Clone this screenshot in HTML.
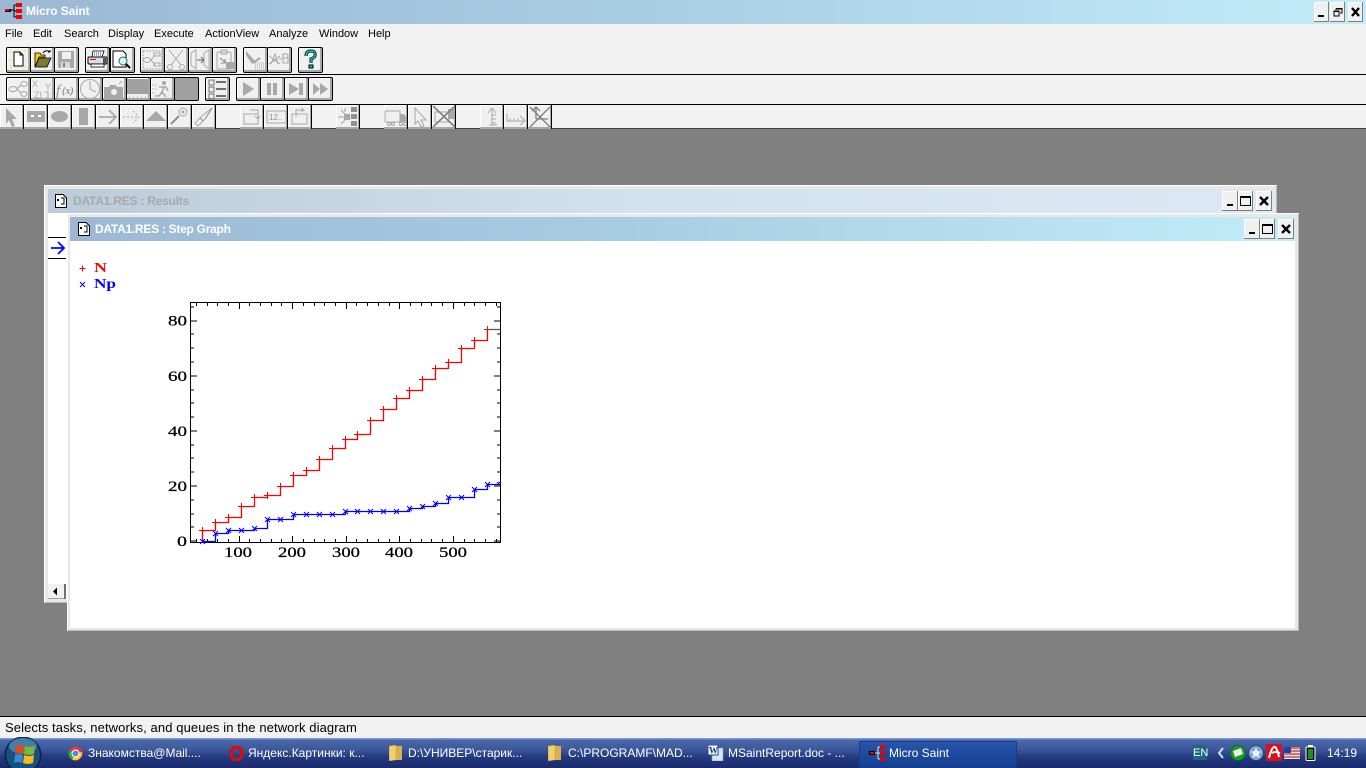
<!DOCTYPE html>
<html><head><meta charset="utf-8"><title>Micro Saint</title>
<style>
html,body{margin:0;padding:0;width:1366px;height:768px;overflow:hidden;background:#808080;font-family:"Liberation Sans","Noto Sans CJK SC",sans-serif}
div,span,svg{position:absolute}
.t{white-space:nowrap}
.menu{font-size:11px;top:28px;color:#000;line-height:13px}
.b{box-sizing:border-box;width:25px;background:#f0f0f0;border:1px solid #000;border-radius:2px;box-shadow:inset -2px -2px 0 #a8a8a8,inset 1px 1px 0 #fff}
.c{box-sizing:border-box;width:24px;height:24px;top:105px;background:#f0f0f0;border-right:1px solid #000;box-shadow:inset -1px -2px 0 #a8a8a8,inset 1px 1px 0 #fff}
.b svg,.c svg{left:-1px;top:-1px;width:24px;height:24px}
.c svg{left:0;top:0}
.w{box-sizing:border-box;background:#f0f0f0;box-shadow:inset -1px -1px 0 #808080,inset 1px 1px 0 #fff;height:20px}
.w svg{left:0;top:0;width:100%;height:100%}
.task{color:#fff;font-size:12px;top:746px;line-height:14px;white-space:nowrap}
.g{fill:none;stroke:#a8a8a8;stroke-width:1}
</style></head><body>

<!-- Main title -->
<div style="left:0;top:0;width:1366px;height:24px;background:linear-gradient(90deg,#9cb8d4 0%,#a8cce2 45%,#c2ecfa 100%)"></div>
<svg style="left:4px;top:3px" width="18" height="16" viewBox="0 0 18 16"><path d="M7 7H10M10 2V14M10 2H12M10 8H12M10 14H12" stroke="#000" fill="none"/><rect x="1" y="6" width="6" height="3" fill="#000"/><rect x="1" y="6" width="4" height="2" fill="#f00"/><rect x="12" y="0" width="6" height="4" fill="#e00"/><rect x="12" y="6" width="6" height="4" fill="#e00"/><rect x="12" y="12" width="6" height="4" fill="#e00"/></svg>
<div class="t" style="left:26px;top:4px;font-size:12px;font-weight:bold;color:#fff;line-height:15px;letter-spacing:-.1px">Micro Saint</div>
<div class="w" style="left:1314px;top:2px;width:15px"><svg viewBox="0 0 15 20"><rect x="4" y="13" width="6" height="2" fill="#000"/></svg></div>
<div class="w" style="left:1330px;top:2px;width:15px"><svg viewBox="0 0 15 20"><path d="M6 6.5H12V11H10M6 6.5V8M4 9H9V14H4Z M4 9.5H9 M6 7H12" fill="none" stroke="#000"/></svg></div>
<div class="w" style="left:1348px;top:2px;width:15px"><svg viewBox="0 0 15 20"><path d="M4 6L11 14M11 6L4 14" stroke="#000" stroke-width="2.4"/></svg></div>

<!-- Menu + toolbars -->
<div style="left:0;top:24px;width:1366px;height:104px;background:#f2f2f2"></div>
<div class="menu t" style="left:5px">File</div>
<div class="menu t" style="left:33px">Edit</div>
<div class="menu t" style="left:64px">Search</div>
<div class="menu t" style="left:108px">Display</div>
<div class="menu t" style="left:154px">Execute</div>
<div class="menu t" style="left:205px">ActionView</div>
<div class="menu t" style="left:269px">Analyze</div>
<div class="menu t" style="left:319px">Window</div>
<div class="menu t" style="left:368px">Help</div>
<div style="left:0;top:74px;width:1366px;height:1px;background:#000"></div>
<div style="left:0;top:104px;width:1366px;height:1px;background:#000"></div>
<div style="left:0;top:128px;width:1366px;height:1px;background:#404040"></div>

<!-- Row 1 -->
<div class="b" style="left:6px;top:47px;height:26px"><svg viewBox="0 0 24 24"><path d="M8 5H14L17 8V19H8Z" fill="#fff" stroke="#000"/><path d="M14 5V8H17" fill="none" stroke="#000"/><path d="M4 4L6 6M20 3L18 5M3 13H5M21 13H20M4 21L6 19M20 21L18 19M12 2V3" stroke="#ee0"/></svg></div>
<div class="b" style="left:30px;top:47px;height:26px"><svg viewBox="0 0 24 24"><path d="M5 9V6H10L11 8H15V10H9L5 20Z" fill="#fc0" stroke="#000" stroke-width=".8"/><path d="M5 20L9 11H21L17 20Z" fill="#7a7a30" stroke="#000" stroke-width=".8"/><path d="M13 6Q16 2 20 5M20 5V3M20 5H18" fill="none" stroke="#000"/></svg></div>
<div class="b" style="left:54px;top:47px;height:26px"><svg viewBox="0 0 24 24"><path d="M4 4H20V21H4Z" fill="#a8a8a8"/><rect x="8" y="5" width="9" height="7" fill="#f0f0f0"/><rect x="7" y="15" width="9" height="6" fill="#d8d8d8"/><rect x="9" y="16" width="2" height="4" fill="#808080"/></svg></div>
<div class="b" style="left:85px;top:47px;height:26px"><svg viewBox="0 0 24 24"><path d="M8 4H19L17 10H7Z" fill="#fff" stroke="#000" stroke-width=".8"/><path d="M9 6H17M9 8H16" stroke="#24c" stroke-dasharray="1 1"/><rect x="3" y="10" width="19" height="7" rx="1" fill="#ddd" stroke="#000"/><rect x="5" y="12" width="6" height="1" fill="#f00"/><rect x="18" y="11" width="3" height="6" fill="#555"/><rect x="6" y="17" width="13" height="3" fill="#fff" stroke="#000" stroke-width=".8"/></svg></div>
<div class="b" style="left:110px;top:47px;height:26px"><svg viewBox="0 0 24 24"><path d="M3 4H13L16 7V20H3Z" fill="#fff" stroke="#000"/><circle cx="13" cy="14" r="4" fill="#bff" stroke="#555"/><path d="M16 17L20 21" stroke="#000" stroke-width="2"/></svg></div>
<div class="b" style="left:140px;top:47px;height:26px"><svg viewBox="0 0 24 24"><rect x="3" y="4" width="19" height="18" class="g" stroke-dasharray="2 1"/><ellipse cx="7" cy="13" rx="3.5" ry="2.5" class="g"/><path d="M11 13L15 8M11 13L15 18" class="g"/><rect x="14" y="6" width="6" height="3" class="g"/><rect x="14" y="16" width="6" height="3" class="g"/></svg></div>
<div class="b" style="left:164px;top:47px;height:26px"><svg viewBox="0 0 24 24"><path d="M5 3L17 18M19 3L7 18" class="g" stroke-width="1.5"/><circle cx="6" cy="20" r="2.5" class="g"/><circle cx="18" cy="20" r="2.5" class="g"/></svg></div>
<div class="b" style="left:188px;top:47px;height:26px"><svg viewBox="0 0 24 24"><path d="M3 6L8 3V22L3 18ZM21 3V22L16 18V6Z" class="g"/><path d="M9 13H15M13 10L16 13L13 16" stroke="#808080" fill="none" stroke-width="1.3"/></svg></div>
<div class="b" style="left:212px;top:47px;height:26px"><svg viewBox="0 0 24 24"><rect x="5" y="5" width="14" height="17" rx="1" class="g"/><rect x="9" y="3" width="6" height="4" class="g"/><path d="M8 11L13 15M13 12V16H9" stroke="#808080" fill="none"/><rect x="14" y="15" width="8" height="7" fill="#a8a8a8"/></svg></div>
<div class="b" style="left:243px;top:47px;height:26px"><svg viewBox="0 0 24 24"><path d="M3 4L12 14L9 17L3 8Z" fill="#a8a8a8"/><path d="M10 16L17 11" stroke="#a8a8a8" stroke-width="2"/><path d="M12 16H21M12 18H21M12 20H21M12 22H21" stroke="#a8a8a8" stroke-dasharray="1 1"/></svg></div>
<div class="b" style="left:267px;top:47px;height:26px"><svg viewBox="0 0 24 24"><path d="M4 17L8 7L11 17M5 14H10M2 9L13 17M2 17L13 9" class="g"/><path d="M12 12H15" class="g"/><path d="M16 7H20Q22 9 20 11H16ZM16 11H21V16H16Z" class="g"/></svg></div>
<div class="b" style="left:298px;top:47px;height:26px"><svg viewBox="0 0 24 24"><path d="M8 9Q8 4 13 4Q18 4 17 9Q16 11 13 12V16" fill="none" stroke="#000" stroke-width="3"/><path d="M8 9Q8 4 13 4Q18 4 17 9Q16 11 13 12V16" fill="none" stroke="#1cc" stroke-width="1.4"/><rect x="11" y="18" width="4" height="3" fill="#1cc" stroke="#000"/></svg></div>

<!-- Row 2 -->
<div class="b" style="left:6px;top:77px;height:24px"><svg viewBox="0 0 24 24"><ellipse cx="7" cy="12" rx="4" ry="2.5" class="g"/><path d="M11 12L15 8M11 12L15 16" class="g"/><ellipse cx="18" cy="7" rx="3" ry="2.5" class="g"/><ellipse cx="18" cy="17" rx="3" ry="2.5" class="g"/></svg></div>
<div class="b" style="left:30px;top:77px;height:24px"><svg viewBox="0 0 24 24"><text x="2" y="10" font-size="9" fill="#a8a8a8" font-family="Liberation Sans">X</text><text x="15" y="13" font-size="9" fill="#a8a8a8" font-family="Liberation Sans">Y</text><text x="4" y="21" font-size="9" fill="#a8a8a8" font-family="Liberation Sans">ZI</text><path d="M15 15H18V21H15" class="g"/></svg></div>
<div class="b" style="left:54px;top:77px;height:24px"><svg viewBox="0 0 24 24"><text x="2" y="18" font-size="15" font-style="italic" font-family="Liberation Serif" fill="#909090">f</text><text x="8" y="17" font-size="10" font-weight="bold" font-style="italic" font-family="Liberation Serif" fill="#909090">(x)</text></svg></div>
<div class="b" style="left:78px;top:77px;height:24px"><svg viewBox="0 0 24 24"><circle cx="12" cy="12" r="9.5" class="g"/><path d="M12 4V12L18 15" class="g"/></svg></div>
<div class="b" style="left:102px;top:77px;height:24px"><svg viewBox="0 0 24 24"><path d="M2 10H7L8 8H14L15 10H21V21H2Z" fill="#a8a8a8"/><circle cx="12" cy="15" r="3" fill="#f0f0f0"/><path d="M17 7L20 4" stroke="#a8a8a8"/></svg></div>
<div class="b" style="left:126px;top:77px;height:24px"><svg viewBox="0 0 24 24"><rect x="1" y="2" width="21" height="15" fill="#a0a0a0"/><path d="M3 20H21" stroke="#a0a0a0" stroke-dasharray="1 3"/></svg></div>
<div class="b" style="left:150px;top:77px;height:24px"><svg viewBox="0 0 24 24"><circle cx="14" cy="6" r="2" fill="#a8a8a8"/><path d="M9 10H16L18 14M14 10L12 15L16 20M12 15L9 19H5" stroke="#a8a8a8" fill="none" stroke-width="1.6"/><path d="M2 8H7M2 12H7M2 16H6" stroke="#a8a8a8" stroke-dasharray="1 1"/></svg></div>
<div class="b" style="left:174px;top:77px;height:24px;background:#a0a0a0;box-shadow:none"></div>
<div class="b" style="left:205px;top:77px;height:24px"><svg viewBox="0 0 24 24"><rect x="4" y="3" width="5" height="5" style="fill:none;stroke:#707070"/><rect x="4" y="10" width="5" height="5" style="fill:none;stroke:#707070"/><rect x="4" y="17" width="5" height="5" style="fill:none;stroke:#707070"/><path d="M11 5H21M11 12H21M11 19H21" stroke="#707070" stroke-width="2"/></svg></div>
<div class="b" style="left:236px;top:77px;height:24px"><svg viewBox="0 0 24 24"><path d="M7 5L18 12L7 19Z" fill="#a8a8a8"/></svg></div>
<div class="b" style="left:260px;top:77px;height:24px"><svg viewBox="0 0 24 24"><rect x="7" y="6" width="4" height="12" fill="#a8a8a8"/><rect x="13" y="6" width="4" height="12" fill="#a8a8a8"/></svg></div>
<div class="b" style="left:284px;top:77px;height:24px"><svg viewBox="0 0 24 24"><path d="M5 6L15 12L5 18Z" fill="#a8a8a8"/><rect x="15" y="6" width="4" height="12" fill="#a8a8a8"/></svg></div>
<div class="b" style="left:308px;top:77px;height:24px"><svg viewBox="0 0 24 24"><path d="M5 6L12 12L5 18ZM12 6L20 12L12 18Z" fill="#a8a8a8"/></svg></div>

<!-- Row 3 -->
<div class="c" style="left:0"><svg viewBox="0 0 24 24"><path d="M6 3L17 14H12L15 21L12 22L9 15L6 19Z" fill="#a8a8a8"/></svg></div>
<div class="c" style="left:24px"><svg viewBox="0 0 24 24"><rect x="3" y="6" width="18" height="11" rx="1" fill="#a8a8a8"/><rect x="7" y="10" width="3" height="2" fill="#fff"/><rect x="14" y="10" width="3" height="2" fill="#fff"/></svg></div>
<div class="c" style="left:48px"><svg viewBox="0 0 24 24"><ellipse cx="11.500" cy="11.500" rx="8.500" ry="5.500" fill="#a8a8a8"/></svg></div>
<div class="c" style="left:72px"><svg viewBox="0 0 24 24"><rect x="7" y="3" width="9" height="17" fill="#a8a8a8"/></svg></div>
<div class="c" style="left:96px"><svg viewBox="0 0 24 24"><path d="M3 12H20M13 5L20 12L13 19" fill="none" stroke="#a8a8a8" stroke-width="1.7"/></svg></div>
<div class="c" style="left:120px"><svg viewBox="0 0 24 24"><path d="M3 12H18M13 6L19 12L13 18" fill="none" stroke="#a8a8a8" stroke-dasharray="2 2"/></svg></div>
<div class="c" style="left:144px"><svg viewBox="0 0 24 24"><path d="M2 16L12 6L22 16Z" fill="#a8a8a8"/></svg></div>
<div class="c" style="left:168px"><svg viewBox="0 0 24 24"><circle cx="15" cy="7" r="4" class="g" stroke-width="1.5"/><circle cx="15" cy="7" r="1.500" fill="#a8a8a8"/><path d="M11 11L3 19" stroke="#909090" stroke-width="2"/></svg></div>
<div class="c" style="left:192px"><svg viewBox="0 0 24 24"><path d="M20 3L10 11L3 18L6 21L13 14Z" class="g"/><path d="M8 13L11 16M20 3L13 14" stroke="#909090"/></svg></div>
<div class="c" style="left:240px"><svg viewBox="0 0 24 24"><rect x="4" y="9" width="14" height="10" class="g"/><path d="M10 5H18V14M15 11L18 14L20 11" class="g"/></svg></div>
<div class="c" style="left:264px"><svg viewBox="0 0 24 24"><rect x="3" y="6" width="19" height="12" class="g"/><text x="5" y="15" font-size="8" fill="#909090" font-family="Liberation Sans">12..</text></svg></div>
<div class="c" style="left:288px"><svg viewBox="0 0 24 24"><rect x="4" y="9" width="15" height="10" class="g"/><path d="M8 12V5H16L13 3M16 5L13 7" class="g"/></svg></div>
<div class="c" style="left:336px"><svg viewBox="0 0 24 24"><path d="M2 12H8M5 5L9 9M5 19L9 15M9 3V7" stroke="#a8a8a8"/><rect x="8" y="9" width="6" height="6" fill="#a8a8a8"/><rect x="15" y="2" width="6" height="5" fill="#909090"/><rect x="15" y="9" width="6" height="5" fill="#909090"/><rect x="15" y="16" width="6" height="5" fill="#909090"/></svg></div>
<div class="c" style="left:384px"><svg viewBox="0 0 24 24"><rect x="1" y="6" width="15" height="11" class="g"/><path d="M16 9H20L23 13V17H16Z" fill="#a8a8a8"/><circle cx="5" cy="19" r="1.500" class="g"/><circle cx="9" cy="19" r="1.500" class="g"/><circle cx="17" cy="19" r="1.500" class="g"/><circle cx="21" cy="19" r="1.500" class="g"/></svg></div>
<div class="c" style="left:408px"><svg viewBox="0 0 24 24"><path d="M7 3L18 15H13L16 21L13 22L10 16L7 19Z" class="g"/></svg></div>
<div class="c" style="left:432px"><svg viewBox="0 0 24 24"><rect x="3" y="7" width="14" height="10" class="g"/><rect x="16" y="4" width="6" height="10" fill="#a8a8a8"/><path d="M1 1L23 22M23 1L1 22" stroke="#808080" stroke-width="1.6"/></svg></div>
<div class="c" style="left:480px"><svg viewBox="0 0 24 24"><path d="M12 3L8 8M12 3L16 8M12 3V20H9M12 10H16M12 14H16M12 18H16M9 20H17" class="g"/></svg></div>
<div class="c" style="left:504px"><svg viewBox="0 0 24 24"><path d="M3 9V16H20M16 11L21 15.500L16 20M6 13V16M10 13V16M14 13V16" class="g"/></svg></div>
<div class="c" style="left:528px"><svg viewBox="0 0 24 24"><path d="M8 2V14M4 6L8 2L12 6M8 14H20M2 2L22 22M22 2L2 22" stroke="#808080" fill="none" stroke-width="1.3"/></svg></div>

<!-- Results window -->
<div style="left:44px;top:185px;width:1233px;height:418px;background:#e8e8e4;box-shadow:inset 1px 1px 0 #fff,inset -1px -1px 0 #b8b8b8"></div>
<div style="left:48px;top:189px;width:1226px;height:24px;background:linear-gradient(90deg,#bccbda,#d2e2f0 50%,#dce8f4)"></div>
<div style="left:48px;top:213px;width:20px;height:386px;background:#fff"></div>
<svg style="left:54px;top:193px" width="14" height="15" viewBox="0 0 14 15"><path d="M1.500 1.500H9L12.500 5V14.500H1.500Z" fill="#fff" stroke="#000"/><rect x="3" y="6" width="2" height="2" fill="#000"/><path d="M7 5H10V11H7" fill="none" stroke="#000"/></svg>
<div class="t" style="left:73px;top:194px;font-size:12px;font-weight:bold;color:#a8a8a8;line-height:14px;letter-spacing:-.22px">DATA1.RES : Results</div>
<div class="w" style="left:1222px;top:191px;width:16px"><svg viewBox="0 0 16 20"><rect x="5" y="13" width="6" height="2" fill="#000"/></svg></div>
<div class="w" style="left:1238px;top:191px;width:15px"><svg viewBox="0 0 15 20"><path d="M2.500 5.500H12.500V14.500H2.500Z" fill="none" stroke="#000"/><path d="M2 6H13" stroke="#000" stroke-width="2"/></svg></div>
<div class="w" style="left:1256px;top:191px;width:16px"><svg viewBox="0 0 16 20"><path d="M4 6L12 14M12 6L4 14" stroke="#000" stroke-width="2.4"/></svg></div>
<div style="left:48px;top:237px;width:18px;height:1px;background:#000"></div>
<div style="left:48px;top:258px;width:18px;height:1px;background:#000"></div>
<svg style="left:50px;top:240px" width="16" height="16" viewBox="0 0 16 16"><path d="M1 8H14M8 2L14 8L8 14" fill="none" stroke="#00f" stroke-width="1.800"/></svg>
<div style="left:48px;top:584px;width:16px;height:15px;background:#f0f0f0;box-shadow:inset 0 -1px 0 #a0a0a0"></div>
<div style="left:64px;top:584px;width:2px;height:15px;background:#707070"></div>
<svg style="left:48px;top:584px" width="16" height="15" viewBox="0 0 16 15"><path d="M5 7.500L9 3.500V11.500Z" fill="#000"/></svg>

<!-- Step Graph window -->
<div style="left:67px;top:213px;width:1232px;height:418px;background:#e8e8e4;box-shadow:inset 1px 1px 0 #fff,inset -1px -1px 0 #b8b8b8"></div>
<div style="left:70px;top:217px;width:1225px;height:24px;background:linear-gradient(90deg,#9cb8d4,#a8cce2 45%,#c2ecfa)"></div>
<div style="left:70px;top:241px;width:1225px;height:387px;background:#fff"></div>
<svg style="left:77px;top:221px" width="14" height="15" viewBox="0 0 14 15"><path d="M1.500 1.500H9L12.500 5V14.500H1.500Z" fill="#fff" stroke="#000"/><rect x="3" y="6" width="2" height="2" fill="#000"/><path d="M7 5H10V11H7" fill="none" stroke="#000"/></svg>
<div class="t" style="left:95px;top:222px;font-size:12px;font-weight:bold;color:#fff;line-height:14px;letter-spacing:-.27px">DATA1.RES : Step Graph</div>
<div class="w" style="left:1244px;top:219px;width:16px"><svg viewBox="0 0 16 20"><rect x="5" y="13" width="6" height="2" fill="#000"/></svg></div>
<div class="w" style="left:1260px;top:219px;width:15px"><svg viewBox="0 0 15 20"><path d="M2.500 5.500H12.500V14.500H2.500Z" fill="none" stroke="#000"/><path d="M2 6H13" stroke="#000" stroke-width="2"/></svg></div>
<div class="w" style="left:1278px;top:219px;width:16px"><svg viewBox="0 0 16 20"><path d="M4 6L12 14M12 6L4 14" stroke="#000" stroke-width="2.4"/></svg></div>

<!-- Plot -->
<svg style="left:0;top:0" width="1366" height="768" viewBox="0 0 1366 768" font-family="Liberation Serif">
<g shape-rendering="crispEdges" fill="none">
<path d="M190.500 302.500H500.500V542.500H190.500Z" stroke="#000"/>
<path stroke="#000" d="M191 541h6M191 527h3M191 514h3M191 500h3M191 486h6M191 472h3M191 458h3M191 445h3M191 431h6M191 417h3M191 403h3M191 390h3M191 376h6M191 362h3M191 348h3M191 334h3M191 321h6M191 307h3
M500 541h-6M500 527h-3M500 514h-3M500 500h-3M500 486h-6M500 472h-3M500 458h-3M500 445h-3M500 431h-6M500 417h-3M500 403h-3M500 390h-3M500 376h-6M500 362h-3M500 348h-3M500 334h-3M500 321h-6M500 307h-3"/>
<path stroke="#000" d="M196.500 303v3M207.500 303v3M217.500 303v3M228.500 303v3M239.500 303v6M249.500 303v3M260.500 303v3M271.500 303v3M281.500 303v3M292.500 303v6M303.500 303v3M314.500 303v3M324.500 303v3M335.500 303v3M346.500 303v6M356.500 303v3M367.500 303v3M378.500 303v3M389.500 303v3M399.500 303v6M410.500 303v3M421.500 303v3M431.500 303v3M442.500 303v3M453.500 303v6M464.500 303v3M474.500 303v3M485.500 303v3M496.500 303v3
M196.500 542v-3M207.500 542v-3M217.500 542v-3M228.500 542v-3M239.500 542v-6M249.500 542v-3M260.500 542v-3M271.500 542v-3M281.500 542v-3M292.500 542v-6M303.500 542v-3M314.500 542v-3M324.500 542v-3M335.500 542v-3M346.500 542v-6M356.500 542v-3M367.500 542v-3M378.500 542v-3M389.500 542v-3M399.500 542v-6M410.500 542v-3M421.500 542v-3M431.500 542v-3M442.500 542v-3M453.500 542v-6M464.500 542v-3M474.500 542v-3M485.500 542v-3M496.500 542v-3"/>
</g>
<!-- N -->
<path fill="none" stroke-width="1.300" stroke="#f00" d="M202.500 541V530.500H215.500V522.500H228.500V517.500H241.500V506.500H254.500V497.500H267.500V495.500H280.500V486.500H293.500V475.500H306.500V470.500H319.500V459.500H332.500V448.500H345.500V439.500H357.500V434.500H370.500V420.500H383.500V409.500H396.500V398.500H409.500V390.500H422.500V379.500H435.500V368.500H448.500V362.500H461.500V348.500H474.500V340.500H487.500V329.500H500"/>
<g shape-rendering="crispEdges" fill="none">
<path stroke="#f00" d="M199 530.500h7M202.500 527v7M212 522.500h7M215.500 519v7M225 517.500h7M228.500 514v7M238 506.500h7M241.500 503v7M251 497.500h7M254.500 494v7M264 495.500h7M267.500 492v7M277 486.500h7M280.500 483v7M290 475.500h7M293.500 472v7M303 470.500h7M306.500 467v7M316 459.500h7M319.500 456v7M329 448.500h7M332.500 445v7M342 439.500h7M345.500 436v7M354 434.500h7M357.500 431v7M367 420.500h7M370.500 417v7M380 409.500h7M383.500 406v7M393 398.500h7M396.500 395v7M406 390.500h7M409.500 387v7M419 379.500h7M422.500 376v7M432 368.500h7M435.500 365v7M445 362.500h7M448.500 359v7M458 348.500h7M461.500 345v7M471 340.500h7M474.500 337v7M484 329.500h7M487.500 326v7"/>
<path stroke="#555" d="M487 329.500h13M487.500 326v4"/>
</g>
<!-- Np -->
<path fill="none" stroke-width="1.300" stroke="#00f" d="M202 541.500H215.500V533.500H228.500V530.500H254.500V528.500H267.500V519.500H293.500V514.500H345.500V511.500H409.500V508.500H422.500V506.500H435.500V503.500H448.500V497.500H474.500V489.500H487.500V484.500H500"/>
<g stroke="#00f" fill="none">
<path d="M200 539l5 5M205 539l-5 5M213 531l5 5M218 531l-5 5M226 528l5 5M231 528l-5 5M239 528l5 5M244 528l-5 5M252 526l5 5M257 526l-5 5M265 517l5 5M270 517l-5 5M278 517l5 5M283 517l-5 5M291 512l5 5M296 512l-5 5M304 512l5 5M309 512l-5 5M317 512l5 5M322 512l-5 5M330 512l5 5M335 512l-5 5M343 509l5 5M348 509l-5 5M355 509l5 5M360 509l-5 5M368 509l5 5M373 509l-5 5M381 509l5 5M386 509l-5 5M394 509l5 5M399 509l-5 5M407 506l5 5M412 506l-5 5M420 504l5 5M425 504l-5 5M433 501l5 5M438 501l-5 5M446 495l5 5M451 495l-5 5M459 495l5 5M464 495l-5 5M472 487l5 5M477 487l-5 5M485 482l5 5M490 482l-5 5M497 482l3 3M500 482l-3 3"/>
</g>
<g fill="#000" stroke="#000" stroke-width=".25" font-size="15">
<text x="168" y="325.500" textLength="19" lengthAdjust="spacingAndGlyphs">80</text>
<text x="168" y="381" textLength="19" lengthAdjust="spacingAndGlyphs">60</text>
<text x="168" y="436" textLength="19" lengthAdjust="spacingAndGlyphs">40</text>
<text x="168" y="491" textLength="19" lengthAdjust="spacingAndGlyphs">20</text>
<text x="177" y="546" textLength="10" lengthAdjust="spacingAndGlyphs">0</text>
<text x="224" y="557" textLength="28" lengthAdjust="spacingAndGlyphs">100</text>
<text x="278" y="557" textLength="28" lengthAdjust="spacingAndGlyphs">200</text>
<text x="332" y="557" textLength="28" lengthAdjust="spacingAndGlyphs">300</text>
<text x="385" y="557" textLength="28" lengthAdjust="spacingAndGlyphs">400</text>
<text x="439" y="557" textLength="28" lengthAdjust="spacingAndGlyphs">500</text>
</g>
<path d="M79.500 268.500h6M82.500 265.500v6" stroke="#f00" fill="none" shape-rendering="crispEdges"/>
<path d="M80 282l5 5M85 282l-5 5" stroke="#00f" fill="none"/>
<text x="94" y="272" font-size="14" font-weight="bold" fill="#f00" textLength="13" lengthAdjust="spacingAndGlyphs">N</text>
<text x="94" y="288" font-size="14" font-weight="bold" fill="#00f" textLength="22" lengthAdjust="spacingAndGlyphs">Np</text>
</svg>

<!-- Status bar -->
<div style="left:0;top:716px;width:1366px;height:1px;background:#000"></div>
<div style="left:0;top:717px;width:1366px;height:21px;background:#f2f2f2"></div>
<div class="t" style="left:5px;top:720px;font-size:13px;line-height:15px;color:#000;letter-spacing:.1px">Selects tasks, networks, and queues in the network diagram</div>

<!-- Taskbar -->
<div style="left:0;top:738px;width:1366px;height:30px;background:linear-gradient(180deg,#7a96dc 0,#7a96dc 1px,#4a68a8 2px,#3e5a9c 35%,#22397e 65%,#1a2a6c 100%)"></div>
<div style="left:859px;top:741px;width:158px;height:27px;background:linear-gradient(180deg,#2a55ac,#1e4a9c 50%,#123f92);border-radius:2px;box-shadow:inset 0 0 0 1px #1a3c88"></div>
<svg style="left:4px;top:737px" width="40" height="31" viewBox="0 0 40 31"><circle cx="19" cy="18" r="18.500" fill="#0c2440"/><circle cx="19" cy="18" r="17" fill="#17507c"/><ellipse cx="19" cy="9" rx="14" ry="8" fill="#5c98b8" opacity=".65"/><path d="M12 9Q16 7 20 9L19 17Q15 15 11 17Z" fill="#e2491f"/><path d="M21 9Q26 11 31 9L30 17Q25 19 20 17Z" fill="#79b63a"/><path d="M11 18Q15 16 19 18L18 26Q14 24 10 26Z" fill="#3a8bd4"/><path d="M20 18Q25 20 30 18L29 26Q24 28 19 26Z" fill="#f2b920"/></svg>
<svg style="left:68px;top:746px" width="15" height="15" viewBox="0 0 15 15"><circle cx="7.500" cy="7.500" r="7" fill="#e33"/><path d="M7.500 7.500L14 6A7 7 0 0 1 4 13.500Z" fill="#fc2"/><path d="M7.500 7.500L4 13.500A7 7 0 0 1 1 4.500Z" fill="#3a3"/><circle cx="7.500" cy="7.500" r="3.500" fill="#4a8ce8" stroke="#fff"/></svg>
<div class="task" style="left:88px">Знакомства@Mail....</div>
<svg style="left:229px;top:746px" width="15" height="15" viewBox="0 0 15 15"><ellipse cx="7.500" cy="7.500" rx="5.500" ry="6.500" fill="none" stroke="#d01010" stroke-width="3.500"/></svg>
<div class="task" style="left:248px">Яндекс.Картинки: к...</div>
<svg style="left:389px;top:745px" width="14" height="16" viewBox="0 0 14 16"><path d="M0 1L7 0V15L0 16Z" fill="#f0d070" stroke="#a88830" stroke-width=".5"/><path d="M7 1H13V15H7Z" fill="#d8b050"/></svg>
<div class="task" style="left:408px">D:\УНИВЕР\старик...</div>
<svg style="left:548px;top:745px" width="14" height="16" viewBox="0 0 14 16"><path d="M0 1L7 0V15L0 16Z" fill="#f0d070" stroke="#a88830" stroke-width=".5"/><path d="M7 1H13V15H7Z" fill="#d8b050"/></svg>
<div class="task" style="left:568px">C:\PROGRAMF\MAD...</div>
<svg style="left:708px;top:745px" width="16" height="16" viewBox="0 0 16 16"><rect x="4" y="3" width="11" height="13" fill="#d8e4f4" stroke="#8898b8" stroke-width=".6"/><rect x="0" y="0" width="10" height="10" fill="#fff" stroke="#26408a"/><text x="1" y="8.500" font-size="9" font-weight="bold" fill="#1c3484" font-family="Liberation Serif">W</text></svg>
<div class="task" style="left:728px">MSaintReport.doc - ...</div>
<svg style="left:869px;top:745px" width="16" height="16" viewBox="0 0 16 16"><path d="M6 8H9M9 2V14M9 2H11M9 8H11M9 14H11" stroke="#ddd" fill="none"/><rect x="0" y="6" width="6" height="4" fill="#000"/><rect x="1" y="7" width="4" height="2" fill="#f00"/><rect x="11" y="0" width="5" height="4" fill="#e00"/><rect x="11" y="6" width="5" height="4" fill="#e00"/><rect x="11" y="12" width="5" height="4" fill="#e00"/></svg>
<div class="task" style="left:889px">Micro Saint</div>

<!-- Tray -->
<div style="left:1193px;top:745px;width:14px;height:15px;background:#1f6488"></div>
<div class="t" style="left:1193px;top:746px;color:#fff;font-size:11px;line-height:14px">EN</div>
<svg style="left:1216px;top:746px" width="10" height="14" viewBox="0 0 10 14"><path d="M7 2L3 7L7 12" fill="none" stroke="#cfe0ff" stroke-width="2"/></svg>
<svg style="left:1230px;top:745px" width="16" height="16" viewBox="0 0 16 16"><circle cx="8" cy="8" r="7.500" fill="#18a018" stroke="#064"/><path d="M3 6L11 3L13 9L5 12Z" fill="#eee"/></svg>
<svg style="left:1248px;top:745px" width="16" height="16" viewBox="0 0 16 16"><circle cx="8" cy="8" r="7.500" fill="#7aa8d8" stroke="#345"/><path d="M8 2.500L9.700 6.300L13.500 6.500L10.500 9L11.500 13L8 11L4.500 13L5.500 9L2.500 6.500L6.300 6.300Z" fill="#eef"/></svg>
<svg style="left:1266px;top:744px" width="16" height="17" viewBox="0 0 16 17"><rect width="16" height="17" fill="#d81020"/><path d="M3 14Q6 2 9 3Q11 4 13 13M6 9Q9 7 14 9" fill="none" stroke="#fff" stroke-width="2"/></svg>
<svg style="left:1284px;top:747px" width="16" height="12" viewBox="0 0 16 12"><rect width="16" height="12" fill="#e8e0e0"/><path d="M0 1H16M0 4H16M0 7H16M0 10H16" stroke="#c83030" stroke-width="1.200"/><rect width="7" height="6" fill="#2840a0"/></svg>
<svg style="left:1305px;top:745px" width="12" height="16" viewBox="0 0 12 16"><rect x="1" y="2" width="9" height="13.500" rx="1" fill="#111" stroke="#fff"/><rect x="3" y="0" width="5" height="2" fill="#fff"/><rect x="3" y="4" width="5" height="10" fill="#2a8a2a"/></svg>
<div class="t" style="left:1327px;top:746px;color:#fff;font-size:12px;line-height:14px">14:19</div>
</body></html>
